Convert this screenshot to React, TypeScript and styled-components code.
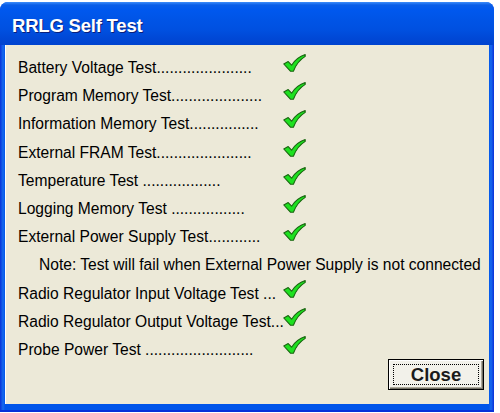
import React from "react";
import styled, { createGlobalStyle } from "styled-components";

const GlobalStyle = createGlobalStyle`
  html, body { margin: 0; padding: 0; background: #ffffff; }
  body { font-family: "Liberation Sans", Arial, sans-serif; }
`;

const Window = styled.div`
  margin-top: 2px;
  width: 494px;
  height: 410px;
  box-sizing: border-box;
  border-radius: 8px 8px 0 0;
  background: linear-gradient(90deg, #0831d9 0px, #166aee 3px, #0055ea 5px, #0055ea calc(100% - 5px), #166aee calc(100% - 3px), #0831d9 100%);
  display: flex;
  flex-direction: column;
  padding: 0 5px 6px 5px;
  border-bottom: 2px solid #0831d9;
`;

const TitleBar = styled.div`
  flex-shrink: 0;
  height: 43px;
  margin: 0 -5px;
  border-radius: 8px 8px 0 0;
  background: linear-gradient(180deg, #3d8dfa 0px, #0a5ee8 3px, #0058ee 8px, #0054e6 18px, #0050e0 28px, #0048d6 36px, #0043cf 43px);
  display: flex;
  align-items: center;
  padding-left: 12px;
  padding-top: 5px;
  box-sizing: border-box;
`;

const Title = styled.span`
  font-family: "Liberation Sans", Arial, sans-serif;
  font-weight: bold;
  font-size: 18.5px;
  color: #ffffff;
  text-shadow: 1px 1px 0 #0a1f7a;
  letter-spacing: -0.2px;
`;

const Client = styled.div`
  flex: 1;
  min-height: 0;
  background: #ece9d8;
  border-left: 1px solid #ffffff;
  display: flex;
  flex-direction: column;
  padding: 9px 0 0 12px;
`;

const List = styled.div`
  flex: 1;
  min-height: 0;
  display: flex;
  flex-direction: column;
`;

const Row = styled.div`
  flex-shrink: 0;
  display: flex;
  align-items: flex-start;
  height: 28.2px;
`;

const Label = styled.span<{ $indent?: number }>`
  width: 265px;
  padding-left: ${(p) => p.$indent ?? 0}px;
  font-family: "Liberation Sans", Arial, sans-serif;
  font-size: 15.6px;
  line-height: 28px;
  color: #000000;
  white-space: nowrap;
`;

const CheckBox = styled.span`
  display: inline-flex;
  margin-top: 0px;
`;

const Footer = styled.div`
  flex-shrink: 0;
  display: flex;
  justify-content: flex-end;
  padding: 0 5px 14px 0;
`;

const Button = styled.button`
  width: 96px;
  height: 31px;
  box-sizing: border-box;
  border: 1px solid #000000;
  background: #f2f1ea;
  box-shadow: inset 1px 1px 0 #ffffff, inset -1px -1px 0 #716f64, inset -2px -2px 0 #aca899;
  padding: 4px;
  display: flex;
  cursor: default;
`;

const FocusRect = styled.span`
  flex: 1;
  border: 1px dotted #000000;
  display: flex;
  align-items: center;
  justify-content: center;
  font-family: "Liberation Sans", Arial, sans-serif;
  font-weight: bold;
  font-size: 18.5px;
  color: #1a1a1a;
`;

const Check = () => (
  <svg width="23" height="18" viewBox="0 0 23 18">
    <path
      d="M0.8 10 L5.2 7.6 L8.6 11.2 C11.6 6.6 16 2.6 22.2 0.6 L22.2 2.4 C17 5.6 13 10.6 10.4 17.2 L7.4 17.2 Z"
      fill="#1ee020"
      stroke="#1a6410"
      strokeWidth="1.1"
      strokeLinejoin="round"
    />
  </svg>
);

const tests: { label: string; check: boolean; indent?: number }[] = [
  { label: "Battery Voltage Test......................", check: true },
  { label: "Program Memory Test.....................", check: true },
  { label: "Information Memory Test................", check: true },
  { label: "External FRAM Test......................", check: true },
  { label: "Temperature Test ..................", check: true },
  { label: "Logging Memory Test .................", check: true },
  { label: "External Power Supply Test............", check: true },
  { label: "Note: Test will fail when External Power Supply is not connected", check: false, indent: 21 },
  { label: "Radio Regulator Input Voltage Test ...", check: true },
  { label: "Radio Regulator Output Voltage Test...", check: true },
  { label: "Probe Power Test .........................", check: true },
];

export default function App() {
  return (
    <>
      <GlobalStyle />
      <Window>
        <TitleBar>
          <Title>RRLG Self Test</Title>
        </TitleBar>
        <Client>
          <List>
            {tests.map((t) => (
              <Row key={t.label}>
                <Label $indent={t.indent}>{t.label}</Label>
                {t.check && (
                  <CheckBox>
                    <Check />
                  </CheckBox>
                )}
              </Row>
            ))}
          </List>
          <Footer>
            <Button>
              <FocusRect>Close</FocusRect>
            </Button>
          </Footer>
        </Client>
      </Window>
    </>
  );
}
